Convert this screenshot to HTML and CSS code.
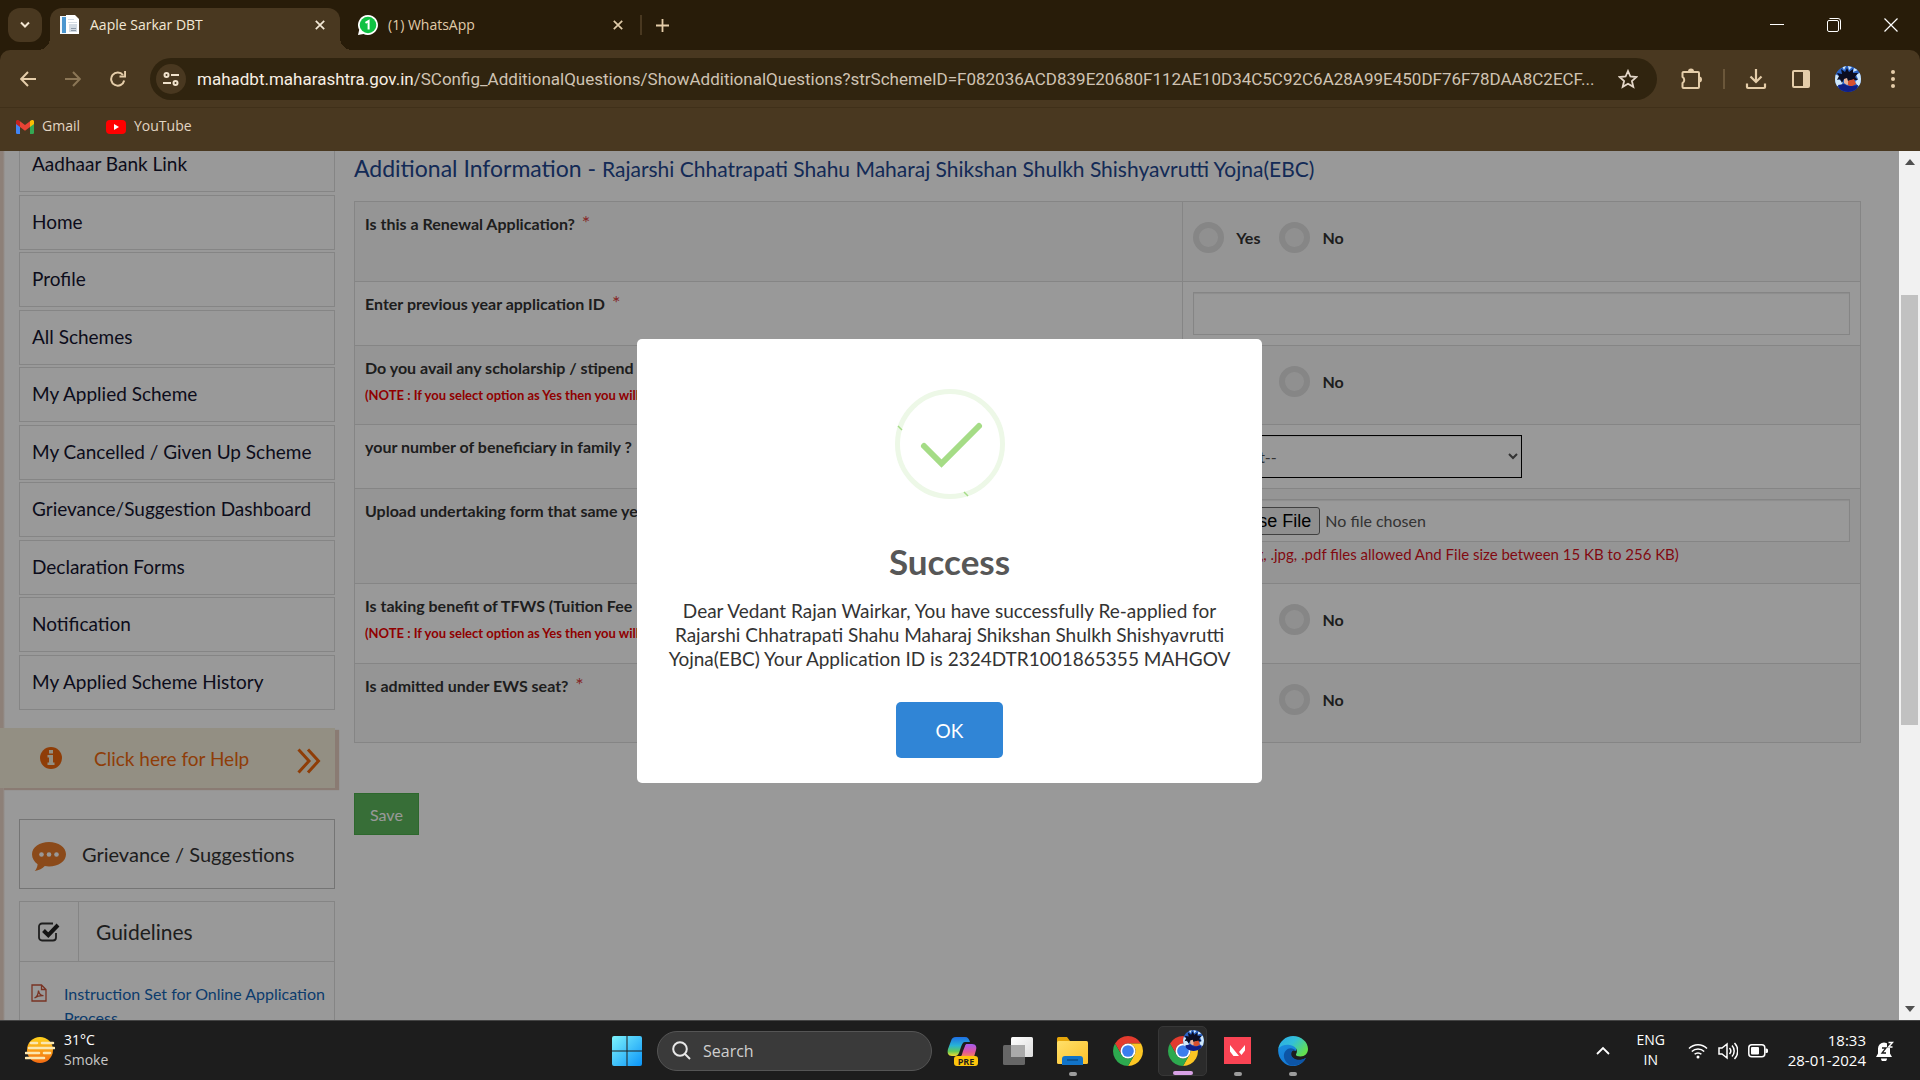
FILE: index.html
```html
<!DOCTYPE html>
<html lang="en">
<head>
<meta charset="utf-8">
<title>Aaple Sarkar DBT</title>
<link rel="stylesheet" href="styles.css">
</head>
<body>
<svg class="defs" aria-hidden="true">
  <defs>
    <linearGradient id="gWin" x1="0" y1="0" x2="1" y2="1"><stop offset="0" stop-color="#7df3fc"/><stop offset="1" stop-color="#0a94f8"/></linearGradient>
    <linearGradient id="gSun" x1="0" y1="0" x2="0" y2="1"><stop offset="0" stop-color="#ffd21c"/><stop offset="1" stop-color="#f26a12"/></linearGradient>
    <linearGradient id="gFolder" x1="0" y1="0" x2="1" y2="1"><stop offset="0" stop-color="#ffe06a"/><stop offset="1" stop-color="#fcc02a"/></linearGradient>
    <linearGradient id="gCopA" x1="0" y1="0" x2="0" y2="1"><stop offset="0" stop-color="#1f6fe5"/><stop offset=".45" stop-color="#27b3d6"/><stop offset=".75" stop-color="#5fc95a"/><stop offset="1" stop-color="#f5dc2e"/></linearGradient>
    <linearGradient id="gCopB" x1="0" y1="0" x2="0" y2="1"><stop offset="0" stop-color="#a35cf0"/><stop offset=".6" stop-color="#e2559b"/><stop offset="1" stop-color="#f58a50"/></linearGradient>
    <linearGradient id="gView" x1="0" y1="0" x2="1" y2="1"><stop offset="0" stop-color="#ffffff"/><stop offset="1" stop-color="#dcdcdc"/></linearGradient>
    <linearGradient id="gEdgeA" x1="0" y1="0" x2="1" y2=".6"><stop offset="0" stop-color="#2aa8e8"/><stop offset=".5" stop-color="#33c0d8"/><stop offset="1" stop-color="#63e04f"/></linearGradient>
    <linearGradient id="gEdgeB" x1="0" y1="0" x2=".4" y2="1"><stop offset="0" stop-color="#1b8fe0"/><stop offset="1" stop-color="#1478d4"/></linearGradient>
    <symbol id="chrome" viewBox="4 4 40 40">
      <path fill="#e33b2e" d="M6.68 14A20 20 0 0 1 41.32 14H24A10 10 0 0 0 15.34 29Z"/>
      <path fill="#fcc624" d="M41.32 14A20 20 0 0 1 24 44L32.66 29A10 10 0 0 0 24 14Z"/>
      <path fill="#2da94f" d="M24 44A20 20 0 0 1 6.68 14L15.34 29A10 10 0 0 0 32.66 29Z"/>
      <circle cx="24" cy="24" r="10" fill="#fff"/><circle cx="24" cy="24" r="7.8" fill="#3b7ded"/>
    </symbol>
    <symbol id="avatar" viewBox="0 0 26 26">
      <clipPath id="avClip"><circle cx="13" cy="13" r="13"/></clipPath>
      <g clip-path="url(#avClip)">
        <path fill="#2a62c4" d="M0 0h26v26H0z"/>
        <path fill="#cfe8fb" d="M0 8l6 3-3 2 5 3-2 4-6 0zM26 6l-5 3 2 4-3 3 3 4 3-1zM7 0l2 4 2-4zM13 0l1 4 3-3zM19 2l-1 4 5-2z"/>
        <path fill="#0b0d20" d="M2 7l5 1-1-5 4 3 2-4 2 4 4-3 0 4 5 0-3 4 3 3-4 0 1 4-4-3-4 1-3-3-2 4-2-4-3 1 2-4z"/>
        <path fill="#e9b49b" d="M9 13l3-1 1 3 4-1-2 4-3 1-3-2z"/>
        <path fill="#d8502f" d="M13 15l6-2 2 5-5 3-3-2z"/>
        <path fill="#101f86" d="M3 19l6-1 4 2 4 0 6-1-2 7H5z"/>
      </g>
    </symbol>
    <symbol id="cross" viewBox="0 0 10 10"><path d="M.8.8l8.400 8.400M9.200.8L.8 9.200" fill="none" stroke="currentColor" stroke-width="1.700"/></symbol>
  </defs>
</svg>

<header class="browser">
  <div class="tabstrip">
    <button class="tab-search" aria-label="Search tabs"><svg width="10" height="8" viewBox="0 0 10 8"><path d="M1 1.500l4 4 4-4" fill="none" stroke="currentColor" stroke-width="2"/></svg></button>
    <div class="tab tab-active">
      <svg width="20" height="20" viewBox="0 0 20 20"><path fill="#f2f6fa" d="M0 1h6v18H0z"/><path fill="#4b96cf" d="M2 2h4v16H2z"/><path fill="#fff" d="M6 0h9l4 4v15H6z"/><path fill="#d3dbe3" d="M8 4h6v1H8zM8 7h9v1H8zM9 9h8v8H9z"/><path fill="#8d9aa8" d="M11 13h5v1h-5zM11 15h5v1h-5z"/></svg>
      <span class="tab-title">Aaple Sarkar DBT</span>
      <button class="icon-btn" aria-label="Close tab"><svg width="10" height="10"><use href="#cross"/></svg></button>
    </div>
    <div class="tab">
      <svg width="20" height="20" viewBox="0 0 20 20"><path fill="#fff" d="M10 0a10 10 0 1 1-4.600 18.900L0 20l1.200-5.200A10 10 0 0 1 10 0z"/><circle cx="10" cy="10" r="8.300" fill="#0fc143"/><path fill="none" stroke="#fff" stroke-width="2" d="M7.500 7.800L10.600 6v8.500"/></svg>
      <span class="tab-title">(1) WhatsApp</span>
      <button class="icon-btn" aria-label="Close tab"><svg width="10" height="10"><use href="#cross"/></svg></button>
    </div>
    <span class="tab-sep"></span>
    <button class="icon-btn new-tab" aria-label="New tab"><svg width="13" height="13" viewBox="0 0 13 13"><path d="M6.500 0v13M0 6.500h13" stroke="currentColor" stroke-width="1.800"/></svg></button>
    <div class="window-controls">
      <button class="icon-btn" aria-label="Minimise"><svg width="14" height="14" viewBox="0 0 14 14"><path d="M0 6.500h14" stroke="#fff"/></svg></button>
      <button class="icon-btn" aria-label="Restore"><svg width="14" height="14" viewBox="0 0 14 14" fill="none" stroke="#fff"><rect x=".5" y="2.500" width="11" height="11" rx="1.500"/><path d="M2.500.5H11a2.500 2.500 0 0 1 2.500 2.500v8.500"/></svg></button>
      <button class="icon-btn" aria-label="Close"><svg width="14" height="14" viewBox="0 0 14 14"><path d="M.5.5l13 13M13.500.5l-13 13" stroke="#fff" stroke-width="1.200"/></svg></button>
    </div>
  </div>
  <div class="toolbar">
    <div class="nav-buttons">
      <button class="icon-btn" aria-label="Back"><svg width="16" height="16" viewBox="0 0 16 16"><path d="M16 8H1.500M8 1L1.200 8 8 15" fill="none" stroke="currentColor" stroke-width="2"/></svg></button>
      <button class="icon-btn dim" aria-label="Forward"><svg width="16" height="16" viewBox="0 0 16 16"><path d="M0 8h14.500M8 1l6.800 7L8 15" fill="none" stroke="currentColor" stroke-width="2"/></svg></button>
      <button class="icon-btn" aria-label="Reload"><svg width="16" height="16" viewBox="0 0 16 16"><path d="M14.200 9.500A6.600 6.600 0 1 1 13 4" fill="none" stroke="currentColor" stroke-width="2"/><path fill="currentColor" d="M16 0v6.500H9.500V4.600h4.600V0z"/></svg></button>
    </div>
    <div class="omnibox">
      <button class="site-info" aria-label="Site information"><svg width="16" height="14" viewBox="0 0 16 14" fill="none" stroke="currentColor" stroke-width="2"><circle cx="3.500" cy="3" r="2"/><path d="M8 3h8M0 11h8"/><circle cx="12.500" cy="11" r="2"/></svg></button>
      <div class="url" role="textbox" aria-label="Address"><span>mahadbt.maharashtra.gov.in</span>/SConfig_AdditionalQuestions/ShowAdditionalQuestions?strSchemeID=F082036ACD839E20680F112AE10D34C5C92C6A28A99E450DF76F78DAA8C2ECF...</div>
      <button class="icon-btn" aria-label="Bookmark this tab"><svg width="20" height="20" viewBox="0 0 20 20"><path d="M10 2l2.400 5.500 6 .5-4.500 4 1.400 5.800L10 14.700l-5.300 3.100L6.100 12 1.600 8l6-.5z" fill="none" stroke="#e3d6c8" stroke-width="1.800"/></svg></button>
    </div>
    <div class="actions">
      <button class="icon-btn" aria-label="Extensions"><svg width="22" height="22" viewBox="0 0 22 22"><path fill="currentColor" d="M7 3.500a3 3 0 0 1 6 0zM18 8.500a3 3 0 0 1 0 6z"/><path d="M2.500 4H17a1 1 0 0 1 1 1v14a1 1 0 0 1-1 1H2.500a1 1 0 0 1-1-1v-3.800a3.800 3.800 0 0 0 0-6.400V5a1 1 0 0 1 1-1z" fill="none" stroke="currentColor" stroke-width="2"/></svg></button>
      <span class="tool-sep"></span>
      <button class="icon-btn" aria-label="Downloads"><svg width="22" height="22" viewBox="0 0 22 22" fill="none" stroke="currentColor" stroke-width="2.200"><path d="M11 1v12.500M5.500 8.500L11 14l5.500-5.500M2 15.500V19a1 1 0 0 0 1 1h16a1 1 0 0 0 1-1v-3.500"/></svg></button>
      <button class="icon-btn" aria-label="Side panel"><svg width="20" height="20" viewBox="0 0 20 20"><path fill="currentColor" fill-rule="evenodd" d="M3 1h14a2 2 0 0 1 2 2v14a2 2 0 0 1-2 2H3a2 2 0 0 1-2-2V3a2 2 0 0 1 2-2zM3 3v14h9V3z"/></svg></button>
      <button class="icon-btn" aria-label="Profile"><svg width="26" height="26"><use href="#avatar"/></svg></button>
      <button class="icon-btn" aria-label="Menu"><svg width="4" height="18" viewBox="0 0 4 18" fill="currentColor"><circle cx="2" cy="2" r="2"/><circle cx="2" cy="9" r="2"/><circle cx="2" cy="16" r="2"/></svg></button>
    </div>
  </div>
  <nav class="bookmarks">
    <a href="#"><svg width="18" height="14" viewBox="0 0 18 14"><path fill="#4285f4" d="M0 2.500l4 3V14H1.200A1.200 1.200 0 0 1 0 12.800z"/><path fill="#34a853" d="M18 2.500l-4 3V14h2.800a1.200 1.200 0 0 0 1.200-1.200z"/><path fill="#fbbc04" d="M14 1l1.400-.8A1.700 1.700 0 0 1 18 2v2l-4 3z"/><path fill="#c5221f" d="M0 2A1.700 1.700 0 0 1 2.700.3L4 1.200V7L0 4z"/><path fill="#ea4335" d="M4 1.200L9 5l5-3.800V7l-5 3.800L4 7z"/></svg>Gmail</a>
    <a href="#"><svg width="20" height="14" viewBox="0 0 20 14"><rect width="20" height="14" rx="4" fill="#f00"/><path fill="#fff" d="M8 4l5 3-5 3z"/></svg>YouTube</a>
  </nav>
</header>

<div class="viewport">
  <div class="page">
    <aside class="sidebar">
      <ul class="menu">
        <li><a href="#">Aadhaar Bank Link</a></li>
        <li><a href="#">Home</a></li>
        <li><a href="#">Profile</a></li>
        <li><a href="#">All Schemes</a></li>
        <li><a href="#">My Applied Scheme</a></li>
        <li><a href="#">My Cancelled / Given Up Scheme</a></li>
        <li><a href="#">Grievance/Suggestion Dashboard</a></li>
        <li><a href="#">Declaration Forms</a></li>
        <li><a href="#">Notification</a></li>
        <li><a href="#">My Applied Scheme History</a></li>
      </ul>
      <a class="help" href="#">
        <svg width="22" height="22" viewBox="0 0 22 22"><circle cx="11" cy="11" r="11" fill="currentColor"/><path fill="#f5eedb" d="M9 3h4v3.500H9zM7.500 8H13v7.500h1.500V18h-7v-2.500H9v-5H7.500z"/></svg>
        <span>Click here for Help</span>
        <svg class="chevrons" width="24" height="26" viewBox="0 0 24 26"><path d="M1.500 1.500L12 13 1.500 24.500M11 1.500L21.500 13 11 24.500" fill="none" stroke="currentColor" stroke-width="3"/></svg>
      </a>
      <a class="grievance" href="#">
        <svg width="34" height="29" viewBox="0 0 34 29"><path fill="#e87c2c" d="M17 0c9.400 0 17 5.200 17 12.200S26.400 24.500 17 24.500c-1.500 0-2.900-.1-4.200-.4C10.500 26.500 7 28.600 2.700 29c1.600-1.700 2.700-3.900 2.900-6.800C2.200 19.800 0 16.200 0 12.200 0 5.200 7.600 0 17 0z"/><g fill="#fff"><circle cx="9.500" cy="12.500" r="2.300"/><circle cx="17" cy="12.500" r="2.300"/><circle cx="24.500" cy="12.500" r="2.300"/></g></svg>
        Grievance / Suggestions
      </a>
      <section class="guidelines">
        <h2><span class="check-cell"><svg width="22" height="20" viewBox="0 0 22 20"><path d="M18 11v4.500A3 3 0 0 1 15 18.500H4A3 3 0 0 1 1 15.500v-11A3 3 0 0 1 4 1.500h11" fill="none" stroke="#333" stroke-width="1.800"/><path d="M5.500 8.500l4.800 4.700L20 3" fill="none" stroke="#222" stroke-width="4"/></svg></span>Guidelines</h2>
        <a href="#"><svg width="16" height="18" viewBox="0 0 16 18" fill="none" stroke="#c9553b" stroke-width="1.300"><path d="M1 1h9.500L15 5.500V17H1zM10.500 1v4.500H15"/><path d="M3.500 14c2-1 3.800-4 4-7.500.5 3.500 2.500 5 5 5.200-3.200-.2-6 .3-9 2.300z"/></svg><span>Instruction Set for Online Application Process</span></a>
      </section>
    </aside>

    <main class="content">
      <h1>Additional Information - <small>Rajarshi Chhatrapati Shahu Maharaj Shikshan Shulkh Shishyavrutti Yojna(EBC)</small></h1>
      <table class="questions">
        <tr><td>Is this a Renewal Application? <sup>*</sup></td>
          <td><div class="radios"><label><input type="radio" name="renewal">Yes</label><label><input type="radio" name="renewal">No</label></div></td></tr>
        <tr><td><label for="prev">Enter previous year application ID <sup>*</sup></label></td>
          <td><input class="field" id="prev" type="text"></td></tr>
        <tr><td>Do you avail any scholarship / stipend ? <sup>*</sup><p class="note">(NOTE : If you select option as Yes then you will)</p></td>
          <td><div class="radios"><label><input type="radio" name="stipend">Yes</label><label><input type="radio" name="stipend">No</label></div></td></tr>
        <tr><td><label for="family">your number of beneficiary in family ? <sup>*</sup></label></td>
          <td><select class="field" id="family"><option>--Select--</option></select></td></tr>
        <tr><td><label for="upload">Upload undertaking form that same year <sup>*</sup></label></td>
          <td><input class="field" id="upload" type="file"><p class="hint">(Only .jpeg, .jpg, .pdf files allowed And File size between 15 KB to 256 KB)</p></td></tr>
        <tr><td>Is taking benefit of TFWS (Tuition Fee <sup>*</sup><p class="note">(NOTE : If you select option as Yes then you will)</p></td>
          <td><div class="radios"><label><input type="radio" name="tfws">Yes</label><label><input type="radio" name="tfws">No</label></div></td></tr>
        <tr><td>Is admitted under EWS seat? <sup>*</sup></td>
          <td><div class="radios"><label><input type="radio" name="ews">Yes</label><label><input type="radio" name="ews">No</label></div></td></tr>
      </table>
      <button class="save">Save</button>
    </main>
  </div>

  <div class="overlay">
    <div class="dialog" role="dialog" aria-labelledby="dlg-title">
      <svg class="tick" width="110" height="110" viewBox="0 0 110 110" fill="none"><circle cx="55" cy="55" r="52.500" stroke="#edf8e7" stroke-width="5"/><path d="M3 37l4 4M69 103l4 4" stroke="#a5dc86" stroke-width="1.500"/><path d="M29 57L46.500 74.500 84 37" stroke="#a5dc86" stroke-width="6" stroke-linecap="round"/></svg>
      <h2 id="dlg-title">Success</h2>
      <p>Dear Vedant Rajan Wairkar, You have successfully Re-applied for Rajarshi Chhatrapati Shahu Maharaj Shikshan Shulkh Shishyavrutti Yojna(EBC) Your Application ID is 2324DTR1001865355 MAHGOV</p>
      <button>OK</button>
    </div>
  </div>
  <div class="scrollbar">
    <svg width="10" height="6" viewBox="0 0 10 6"><path d="M0 6l5-6 5 6z" fill="#505050"/></svg>
    <span class="track"><span class="thumb"></span></span>
    <svg width="10" height="6" viewBox="0 0 10 6"><path d="M0 0l5 6 5-6z" fill="#505050"/></svg>
  </div>
</div>

<footer class="taskbar">
  <div class="weather">
    <svg width="30" height="26" viewBox="0 0 30 26"><circle cx="15" cy="13" r="13" fill="url(#gSun)"/><g stroke="#fbe7b0" stroke-width="2.600" stroke-linecap="round"><path d="M6 6h6M17 6h11M4 11h25M1 16h13M19 16h6M1 21h18"/></g></svg>
    <div><b>31°C</b><span>Smoke</span></div>
  </div>
  <div class="apps">
    <button class="app start" aria-label="Start"><svg width="30" height="30" viewBox="0 0 30 30"><path fill="url(#gWin)" d="M2 0h12.500v14.500H0V2a2 2 0 0 1 2-2zM15.500 0H28a2 2 0 0 1 2 2v12.500H15.500zM0 15.500h14.500V30H2a2 2 0 0 1-2-2zM15.500 15.500H30V28a2 2 0 0 1-2 2H15.500z"/></svg></button>
    <label class="search"><svg width="19" height="19" viewBox="0 0 19 19" fill="none" stroke="#e8e8e8" stroke-width="2"><circle cx="8" cy="8" r="6.800"/><path d="M13 13l5 5"/></svg><input type="text" placeholder="Search" aria-label="Search"></label>
    <button class="app" aria-label="Copilot"><svg width="32" height="30" viewBox="0 0 32 30"><path fill="url(#gCopA)" d="M9 1h9c3 0 4 2 5 5h-5c-2 0-3 2-4 5l-2 6c-1 2-2 3-4 3H5c-4 0-5-3-4-7l3-8c1-3 2-4 5-4z"/><path fill="url(#gCopB)" d="M20 8h5c4 0 5 3 4 6l-2 7H13c2-1 2-3 3-6l2-5c.5-1.500 1-2 2-2z"/><rect x="7" y="20" width="24" height="10" rx="3" fill="#fdc50b"/><text x="19" y="28.500" class="pre">PRE</text></svg></button>
    <button class="app" aria-label="Task view"><svg width="30" height="28" viewBox="0 0 30 28"><rect y="8" width="22" height="20" rx="1.500" fill="#666"/><rect x="8" width="22" height="20" rx="1.500" fill="url(#gView)"/><path fill="#aaa" d="M8 8h14v12H8z"/></svg></button>
    <button class="app running" aria-label="File Explorer"><svg width="31" height="28" viewBox="0 0 31 28"><path fill="#e5a50a" d="M1.500 0H10l3 4h16v8H0V1.500A1.500 1.500 0 0 1 1.500 0z"/><rect y="4" width="31" height="23" rx="1.500" fill="url(#gFolder)"/><path fill="#1173c8" d="M8 19h15a3 3 0 0 1 3 3v6H5v-6a3 3 0 0 1 3-3z"/><path d="M10 23h11" stroke="#0b4c87" stroke-width="1.500"/></svg></button>
    <button class="app" aria-label="Chrome"><svg width="30" height="30"><use href="#chrome"/></svg></button>
    <button class="app active" aria-label="Chrome profile"><svg width="30" height="30"><use href="#chrome"/></svg><svg class="badge" width="21" height="21"><use href="#avatar"/></svg></button>
    <button class="app running" aria-label="Valorant"><svg width="27" height="27" viewBox="0 0 27 27"><path fill="#fa4454" d="M0 0h27v27H0z"/><path fill="#fff" d="M6 8l9 11h-5.500L6 14.500zM21 8v5.500L17.500 18l-2.500-3z"/></svg></button>
    <button class="app running" aria-label="Edge"><svg width="30" height="30" viewBox="0 0 30 30"><path fill="url(#gEdgeB)" d="M.3 12.500C2.500 7 8 5.500 13 7c5 1.500 6 5 5 8-3-2-5.500 0-5.200 3.500.4 4 5.200 6.500 10 5.500 2-.4 3.800-1.200 5-2C25 27.500 20 30 15 30 6.500 30-1 22 .3 12.500z"/><path fill="#0d55a6" d="M18 15c-2.500-3-7-4-10.500 0-3.500 4.500-1 11 4.500 14.200 5 1.500 12.500-.7 15.800-7.200-6 3.500-14 1.500-14.500-3.500-.2-2 .8-3.800 2-4.300z"/><path fill="url(#gEdgeA)" d="M.3 12.500C1.600 5.500 7.600 0 15 0c8.300 0 15 6 15 13 0 4.500-3.200 7.500-7.500 7.500-3 0-5-1-4.500-2.300 2.800-4-.5-9-7.500-9.500C6 8.500 2.500 9.800.3 12.500z"/></svg></button>
  </div>
  <div class="tray">
    <svg width="14" height="9" viewBox="0 0 14 9"><path d="M1 8l6-6 6 6" fill="none" stroke="#fff" stroke-width="1.800"/></svg>
    <div class="lang"><span>ENG</span><span>IN</span></div>
    <div class="status">
      <svg width="20" height="16" viewBox="0 0 20 16" fill="none" stroke="#fff" stroke-width="1.500"><path d="M1 5.500a12.700 12.700 0 0 1 18 0M3.800 8.500a8.800 8.800 0 0 1 12.400 0M6.600 11.300a4.800 4.800 0 0 1 6.800 0"/><circle cx="10" cy="14" r="1.500" fill="#fff" stroke="none"/></svg>
      <svg width="20" height="18" viewBox="0 0 20 18" fill="none" stroke="#fff" stroke-width="1.500"><path d="M1 6h3l5-4v14l-5-4H1zM11.500 6a4.500 4.500 0 0 1 0 6M14 3.500a8 8 0 0 1 0 11M16.500 1a11.500 11.500 0 0 1 0 16"/></svg>
      <svg width="20" height="14" viewBox="0 0 20 14"><rect x=".8" y=".8" width="16" height="12" rx="3" fill="none" stroke="#fff" stroke-width="1.500"/><rect x="3" y="3" width="8" height="7.500" rx="1" fill="#fff"/><path fill="#fff" d="M17.500 4.500h1A1.500 1.500 0 0 1 20 6v1.500A1.500 1.500 0 0 1 18.500 9h-1z"/></svg>
    </div>
    <div class="clock"><span>18:33</span><span>28-01-2024</span></div>
    <svg width="18" height="20" viewBox="0 0 18 20"><path fill="#fff" d="M8 1.500a6 6 0 0 1 6 6v5l2 3.500H0l2-3.500v-5a6 6 0 0 1 6-6zM5 17.500h6a3 3 0 0 1-6 0z"/><path d="M6 7h4l-4 5h4" fill="none" stroke="#1d1d1d" stroke-width="1.300"/><path fill="#1d1d1d" d="M11 0h7v7h-7z"/><path d="M12.500 1.500h4l-4 4.500h4" fill="none" stroke="#fff" stroke-width="1.400"/></svg>
  </div>
</footer>
</body>
</html>
```
FILE: styles.css
```css
* { box-sizing: border-box; }

html, body { height: 100%; }

body {
  margin: 0;
  display: flex;
  flex-direction: column;
  overflow: hidden;
  font-family: Lato, "Open Sans", sans-serif;
  color: #333;
  background: #fff;
}

ul, h1, h2, p { margin: 0; padding: 0; }
a { color: inherit; text-decoration: none; }
button { font: inherit; padding: 0; border: 0; background: none; cursor: pointer; }
svg { display: block; flex: none; }
.defs { position: absolute; width: 0; height: 0; }

/* Browser frame */
.browser {
  flex: none;
  background: #281c09;
  color: #e5cda9;
  font: 14px/20px "Open Sans", sans-serif;
}

.icon-btn { display: grid; place-items: center; color: inherit; }

.tabstrip {
  display: flex;
  align-items: center;
  height: 50px;
  padding-left: 8px;
}

.tab-search {
  display: grid;
  place-items: center;
  width: 34px;
  height: 34px;
  margin-right: 8px;
  border-radius: 12px;
  background: #493820;
  color: #f3e6d2;
}

.tab {
  position: relative;
  display: flex;
  align-items: center;
  gap: 10px;
  width: 290px;
  height: 42px;
  margin-top: 8px;
  padding: 0 15px 8px 10px;
  color: #e0cba9;
}

.tab + .tab { padding: 0 7px 8px 18px; }
.tab-active {
  border-radius: 12px 12px 0 0;
  background: #493820;
  color: #f3e8d6;
}
/* Curved feet that join the active tab to the toolbar */
.tab-active::before, .tab-active::after {
  content: "";
  position: absolute;
  bottom: 0;
  width: 12px;
  height: 12px;
}
.tab-active::before { right: 100%; background: radial-gradient(circle at 0 0, transparent 12px, #493820 12px); }
.tab-active::after { left: 100%; background: radial-gradient(circle at 100% 0, transparent 12px, #493820 12px); }
.tab-title { flex: 1; }
.tab-sep { width: 2px; height: 20px; margin: 0 14px 0 10px; background: #493820; }

.window-controls {
  display: flex;
  gap: 43px;
  margin-left: auto;
  padding-right: 22px;
}

.toolbar {
  display: flex;
  align-items: center;
  height: 58px;
  padding: 0 25px 0 20px;
  border-bottom: 1px solid #403019;
  border-radius: 10px 10px 0 0;
  background: #493820;
}

.nav-buttons { display: flex; gap: 29px; margin-right: 24px; }
.dim { color: #8b7656; }

.omnibox {
  display: flex;
  flex: 1;
  align-items: center;
  min-width: 0;
  height: 42px;
  padding: 0 19px 0 6px;
  border-radius: 21px;
  background: #30240f;
}

.site-info {
  display: grid;
  place-items: center;
  flex: none;
  width: 30px;
  height: 30px;
  margin-right: 11px;
  border-radius: 50%;
  background: #493820;
  color: #f0e2cc;
}

.url {
  flex: 1;
  min-width: 0;
  overflow: hidden;
  white-space: nowrap;
  font: 17px/24px Roboto, sans-serif;
  color: #cfc3b3;
}
.url span { color: #f8efe4; }

.actions {
  display: flex;
  align-items: center;
  gap: 24px;
  margin-left: 24px;
}
.tool-sep { width: 2px; height: 20px; margin: 0 -4px; background: #6b573a; }
.actions .icon-btn:last-child { margin-left: 6px; }

.bookmarks {
  display: flex;
  gap: 26px;
  height: 43px;
  padding: 8px 16px;
  background: #493820;
  color: #e2d5c3;
}
.bookmarks a { display: flex; align-items: flex-start; gap: 8px; line-height: 20px; }
.bookmarks svg { margin-top: 4px; }

/* Page viewport */
.viewport {
  position: relative;
  display: flex;
  flex: 1;
  min-height: 0;
  overflow: hidden;
}

.page {
  display: grid;
  flex: 1;
  grid-template-columns: 316px 1fr;
  gap: 19px;
  align-items: start;
  padding: 0 38px 0 19px;
  background: linear-gradient(90deg, #ecd6c9 3px, #fff 5px);
}

.sidebar { margin-top: -14px; }

.menu { list-style: none; font-size: 19px; line-height: 24px; color: #15152f; }
.menu li { margin-bottom: 2px; }
.menu li:nth-child(odd) { margin-bottom: 3px; }
.menu a { display: block; padding: 14px 12px 15px; border: 1px solid #dedede; }

.help {
  display: flex;
  align-items: center;
  height: 60px;
  margin: 18px 0 31px -19px;
  padding: 0 14px 0 40px;
  background: #f5eedb;
  box-shadow: 4px 2px 1px #e6cdc0;
  color: #ee670d;
  font-size: 19px;
}
.help span { flex: 1; padding-left: 32px; }
.chevrons { margin-top: 6px; }

.grievance {
  display: flex;
  align-items: center;
  gap: 16px;
  height: 70px;
  margin-bottom: 12px;
  padding: 0 12px;
  border: 1px solid #c4c4c4;
  font-size: 20px;
}
.grievance svg { margin-top: 4px; }

.guidelines { border: 1px solid #dedede; border-bottom: 0; }
.guidelines h2 {
  display: flex;
  align-items: center;
  height: 60px;
  border-bottom: 1px solid #dedede;
  font-size: 21px;
  font-weight: 400;
}
.check-cell {
  display: grid;
  place-items: center;
  width: 59px;
  height: 100%;
  margin-right: 17px;
  border-right: 1px solid #dedede;
}
.guidelines a {
  display: flex;
  gap: 17px;
  padding: 20px 0 0 11px;
  font-size: 16px;
  line-height: 24px;
  color: #1465b5;
}
.guidelines a svg { margin-top: 2px; }

/* Questions form */
h1 {
  margin-bottom: 15px;
  font-size: 23px;
  font-weight: 400;
  line-height: 34px;
  color: #224690;
}
h1 small { font-size: 21px; }

.questions {
  width: 100%;
  table-layout: fixed;
  border-collapse: collapse;
  font-size: 16px;
  font-weight: 700;
  line-height: 24px;
}
.questions td { padding: 10px; border: 1px solid #dedede; vertical-align: top; }
.questions td:first-child { width: 55%; }
.questions tr:nth-child(odd) { background: #f9f9f9; }
.questions sup {
  margin-left: 3px;
  font-size: 20px;
  font-weight: 400;
  line-height: 0;
  vertical-align: baseline;
  color: #e04040;
}

.note { padding-top: 3px; font-size: 13px; color: #f00000; }
.hint { padding: 0 0 7px; font-size: 15px; font-weight: 400; color: #d8101c; }

.radios { display: flex; gap: 19px; padding: 10px 0 18px; }
.questions tr:nth-child(4n+3) .radios { padding-bottom: 17px; }
.radios label { display: flex; align-items: center; gap: 12px; }
.radios input {
  appearance: none;
  width: 31px;
  height: 31px;
  margin: 0;
  border: 6px solid #dfdfdf;
  border-radius: 50%;
  background: #f1f1f1;
}

.field {
  display: block;
  width: 100%;
  height: 43px;
  padding: 7px 12px;
  border: 1px solid #dedede;
  border-radius: 0;
  background: #fff;
  box-shadow: inset 0 1px 1px rgba(0, 0, 0, .08);
  font: 16px/24px Lato, sans-serif;
  color: #555;
}
select.field { width: 50%; padding: 7px 8px 7px 12px; border-color: #000; }
.field::file-selector-button {
  height: 28px;
  margin-right: 5px;
  padding: 0 8px;
  border: 1px solid #6b6b6b;
  border-radius: 3px;
  background: #efefef;
  font: 18px "Liberation Sans", Arial, sans-serif;
  color: #000;
}

.save {
  height: 42px;
  margin-top: 50px;
  padding: 0 15px;
  border: 1px solid #4cae4c;
  background: #5cb85c;
  color: #fff;
  font-size: 16px;
}

/* Success dialog */
.overlay {
  position: absolute;
  inset: 0 21px 0 0;
  display: flex;
  justify-content: center;
  align-items: flex-start;
  padding-top: 188px;
  background: rgba(0, 0, 0, .4);
}
.dialog {
  display: flex;
  flex-direction: column;
  align-items: center;
  width: 625px;
  padding: 50px 25px 25px;
  border-radius: 5px;
  background: #fff;
  text-align: center;
}
.dialog h2 { margin-top: 38px; font-size: 35px; line-height: 48px; color: #575757; }
.dialog p { margin-top: 14px; font-size: 19px; line-height: 24px; }
.dialog button {
  width: 107px;
  height: 56px;
  margin-top: 31px;
  border-radius: 5px;
  background: #3085d6;
  color: #fff;
  font-size: 19px;
}

.scrollbar {
  display: flex;
  flex: none;
  flex-direction: column;
  align-items: center;
  gap: 8px;
  width: 21px;
  padding: 8px 0;
  background: #f1f1f1;
}
.track { flex: 1; width: 17px; padding-top: 122px; }
.thumb { display: block; height: 60%; min-height: 430px; background: #c1c1c1; }

/* Taskbar */
.taskbar {
  display: grid;
  flex: none;
  grid-template-columns: 1fr auto 1fr;
  align-items: center;
  height: 60px;
  padding: 0 26px 0 25px;
  border-top: 1px solid #444;
  background: #1d1d1d;
  color: #fff;
  font: 14px/20px "Open Sans", sans-serif;
}
.weather { display: flex; align-items: center; gap: 9px; padding-bottom: 2px; }
.weather b, .weather span { display: block; font-weight: 400; }
.weather span { color: #c8c8c8; }

.apps { display: flex; align-items: center; gap: 6px; }
.app {
  position: relative;
  display: grid;
  place-items: center;
  width: 49px;
  height: 50px;
  border-radius: 5px;
}
.search {
  display: flex;
  align-items: center;
  gap: 12px;
  width: 275px;
  height: 40px;
  padding: 0 14px;
  border: 1px solid #555;
  border-radius: 20px;
  background: #3a3a3a;
}
.search input {
  min-width: 0;
  flex: 1;
  padding: 0;
  border: 0;
  background: none;
  font: 16px/20px "Open Sans", sans-serif;
}
.search input::placeholder { color: #cfcfcf; opacity: 1; }
.pre { font: 700 9px "Open Sans", sans-serif; text-anchor: middle; fill: #1d1d1d; }

.active { background: #2b2b2b; border: 1px solid #373737; }
.running::after, .active::after {
  content: "";
  position: absolute;
  bottom: 0;
  width: 8px;
  height: 4px;
  border-radius: 2px;
  background: #9c9c9c;
}
.active::after { width: 20px; background: #d8a2e6; }
.badge { position: absolute; top: 3px; right: 2px; }

.tray { display: flex; align-items: center; justify-content: flex-end; }
.tray span { display: block; }
.lang { margin: 0 23px 0 27px; padding-bottom: 2px; text-align: center; }
.status { display: flex; align-items: center; gap: 10px; }
.clock { width: 98px; margin-right: 10px; padding-bottom: 2px; text-align: right; font-size: 15px; }
```
